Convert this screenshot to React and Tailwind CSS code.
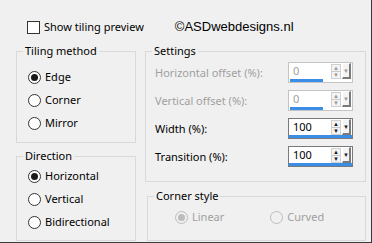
import React from 'react'

const ui = { fontFamily: '"Noto Sans", "Open Sans", sans-serif' }

const Radio = ({ label, checked, disabled }) => (
    <div className="flex items-center gap-[4px] h-[16px]">
        <span
            className={`w-[13px] h-[13px] rounded-full border flex items-center justify-center ${disabled ? 'border-[#bcbcbc] bg-[#f0f0f0]' : 'border-[#333333] bg-white'}`}
        >
            {checked && (
                <span className={`w-[7px] h-[7px] rounded-full ${disabled ? 'bg-[#bcbcbc]' : 'bg-[#1a1a1a]'}`} />
            )}
        </span>
        <span className={`text-[11px] leading-[16px] ${disabled ? 'text-[#a0a0a0]' : 'text-black'}`}>{label}</span>
    </div>
)

const Group = ({ title, className, children }) => (
    <fieldset className={`border border-[#d9d9d9] ${className}`}>
        <legend className="ml-[6px] px-[2px] text-[11px] leading-[16px] text-black">{title}</legend>
        {children}
    </fieldset>
)

const Spin = ({ value, enabled }) => {
    const arrow = enabled ? 'text-[#1a1a1a]' : 'text-[#9a9a9a]'
    return (
        <div className={`w-[65px] h-[21px] border bg-white flex flex-col ${enabled ? 'border-[#7a7a7a]' : 'border-[#c4c4c4]'}`}>
            <div className="flex-1 flex items-center">
                <span className={`flex-1 pl-[4px] text-[11px] leading-[14px] ${enabled ? 'text-black' : 'text-[#a0a0a0]'}`}>{value}</span>
                <div className="w-[10px] h-[15px] flex flex-col border border-[#d0d0d0] bg-[#f4f4f4]">
                    <span className={`flex-1 flex items-center justify-center text-[6px] leading-none border-b border-[#c8c8c8] ${arrow}`}>▲</span>
                    <span className={`flex-1 flex items-center justify-center text-[6px] leading-none ${arrow}`}>▼</span>
                </div>
                <div className="ml-[1px] mr-[1px] w-[9px] h-[16px] flex items-center justify-center bg-[#f4f4f4] border-r-2 border-b-2 border-[#7a7a7a] border-l border-t border-l-white border-t-white">
                    <span className={`text-[6px] leading-none ${arrow}`}>▼</span>
                </div>
            </div>
            <div className={`h-[3px] bg-[#3a8ee6] ${enabled ? 'w-full' : 'w-[33px] ml-[1px]'}`} />
        </div>
    )
}

const Row = ({ label, value, enabled }) => (
    <div className="flex items-center justify-between h-[21px]">
        <span className={`text-[11px] leading-[16px] ${enabled ? 'text-black' : 'text-[#a0a0a0]'}`}>{label}</span>
        <Spin value={value} enabled={enabled} />
    </div>
)

export default function App() {
    return (
        <div
            className="w-[372px] h-[243px] bg-[#f0f0f0] border-r border-b border-[#3a3a3a] overflow-hidden"
            style={ui}
        >
            <div className="flex items-center h-[14px] mt-[20px] ml-[27px]">
                <span className="w-[13px] h-[13px] border border-[#333333] bg-white" />
                <span className="ml-[4px] text-[11px] leading-[16px] text-black">Show tiling preview</span>
                <span
                    className="ml-[31px] text-[13px] leading-[16px] text-black"
                    style={{ fontFamily: '"Liberation Sans", Arial, sans-serif' }}
                >
                    ©ASDwebdesigns.nl
                </span>
            </div>

            <div className="flex mt-[9px] ml-[16px] gap-[9px]">
                <div className="flex flex-col gap-[5px] w-[120px]">
                    <Group title="Tiling method" className="h-[100px]">
                        <div className="flex flex-col gap-[7px] pl-[11px] pt-[10px]">
                            <Radio label="Edge" checked />
                            <Radio label="Corner" />
                            <Radio label="Mirror" />
                        </div>
                    </Group>
                    <Group title="Direction" className="h-[93px]">
                        <div className="flex flex-col gap-[7px] pl-[11px] pt-[4px]">
                            <Radio label="Horizontal" checked />
                            <Radio label="Vertical" />
                            <Radio label="Bidirectional" />
                        </div>
                    </Group>
                </div>

                <div className="flex flex-col w-[221px]">
                    <Group title="Settings" className="h-[139px]">
                        <div className="flex flex-col gap-[7px] pl-[9px] pr-[12px] pt-[3px]">
                            <Row label="Horizontal offset (%):" value="0" />
                            <Row label="Vertical offset (%):" value="0" />
                            <Row label="Width (%):" value="100" enabled />
                            <Row label="Transition (%):" value="100" enabled />
                        </div>
                    </Group>
                    <Group title="Corner style" className="mt-[6px] ml-[2px] h-[53px]">
                        <div className="flex gap-[46px] pl-[27px] pt-[5px]">
                            <Radio label="Linear" checked disabled />
                            <Radio label="Curved" disabled />
                        </div>
                    </Group>
                </div>
            </div>
        </div>
    )
}
